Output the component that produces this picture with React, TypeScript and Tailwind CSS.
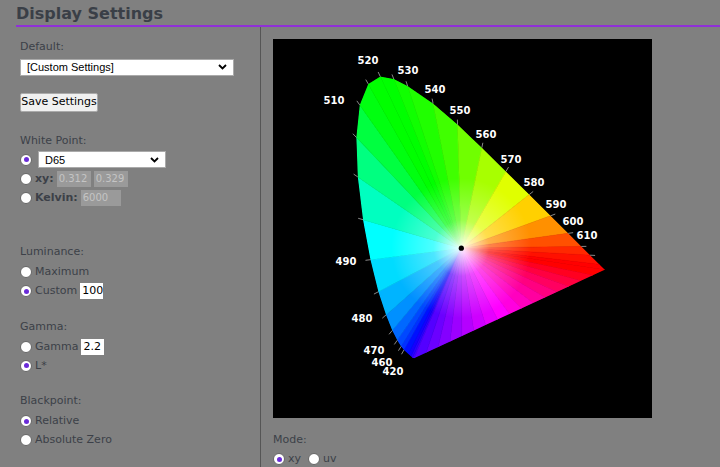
import React from 'react';

const F = { fontFamily: '"DejaVu Sans", Verdana, sans-serif' };

// CIE 1931 spectral locus, wavelength, x, y
const LOCUS: [number, number, number][] = [
  [420, 0.1741, 0.005], [430, 0.1689, 0.0069], [440, 0.1644, 0.0109], [450, 0.1566, 0.0177],
  [460, 0.144, 0.0297], [465, 0.1355, 0.0399], [470, 0.1241, 0.0578], [475, 0.1096, 0.0868],
  [480, 0.0913, 0.1327], [485, 0.0687, 0.2007], [490, 0.0454, 0.295], [495, 0.0235, 0.4127],
  [500, 0.0082, 0.5384], [505, 0.0039, 0.6548], [510, 0.0139, 0.7502], [515, 0.0389, 0.812],
  [520, 0.0743, 0.8338], [525, 0.1142, 0.8262], [530, 0.1547, 0.8059], [540, 0.2296, 0.7543],
  [550, 0.3016, 0.6923], [560, 0.3731, 0.6245], [570, 0.4441, 0.5547], [580, 0.5125, 0.4866],
  [590, 0.5752, 0.4242], [600, 0.627, 0.3725], [610, 0.6658, 0.334], [620, 0.6915, 0.3083],
  [640, 0.719, 0.2809], [700, 0.7347, 0.2653],
];

const COLORS: Record<number, string> = {
  420: '#3a00ff', 430: '#2a00ff', 440: '#1400ff', 450: '#0010ff', 460: '#0030ff', 465: '#0048ff',
  470: '#0068ff', 475: '#0090ff', 480: '#00b4ff', 485: '#00dcff', 490: '#00ffff', 495: '#00ffc0',
  500: '#00ff80', 505: '#00ff40', 510: '#00ff10', 515: '#00ff00', 520: '#00ff00', 525: '#10ff00',
  530: '#20ff00', 540: '#40ff00', 550: '#70ff00', 560: '#a8ff00', 570: '#e0ff00', 580: '#ffd000',
  590: '#ff9000', 600: '#ff5000', 610: '#ff2800', 620: '#ff1000', 640: '#ff0000', 700: '#ff0000',
};

const px = (x: number) => 356 + x * 340;
const py = (y: number) => 360 - y * 340;
const WX = px(0.3127);
const WY = py(0.329);

function lerpHex(a: string, b: string, t: number) {
  const pa = [1, 3, 5].map((i) => parseInt(a.slice(i, i + 2), 16));
  const pb = [1, 3, 5].map((i) => parseInt(b.slice(i, i + 2), 16));
  return `rgb(${pa.map((v, i) => Math.round(v + (pb[i] - v) * t)).join(',')})`;
}

const LABELS: [string, number, number][] = [
  ['520', 369, 64], ['530', 409, 74], ['540', 436, 93], ['550', 461, 114], ['560', 487, 138],
  ['570', 512, 163], ['580', 535, 186], ['590', 557, 208], ['600', 574, 225], ['610', 588, 239],
  ['510', 335, 104], ['490', 347, 265], ['480', 363, 322], ['470', 375, 354], ['460', 383, 366],
  ['420', 394, 375],
];

function Chart() {
  const pts = LOCUS.map(([w, x, y]) => ({ w, x: px(x), y: py(y), c: COLORS[w] }));
  const tris: React.ReactNode[] = [];
  for (let i = 0; i < pts.length - 1; i++) {
    const a = pts[i], b = pts[i + 1];
    tris.push(
      <polygon key={i} points={`${WX},${WY} ${a.x},${a.y} ${b.x},${b.y}`} fill={a.c} stroke={a.c} strokeWidth={0.6} />
    );
  }
  // purple line: red end back to violet start
  const r = pts[pts.length - 1], v = pts[0];
  const N = 16;
  for (let i = 0; i < N; i++) {
    const t0 = i / N, t1 = (i + 1) / N;
    const c = t0 < 0.5 ? lerpHex('#ff0000', '#ff00ff', t0 * 2) : lerpHex('#ff00ff', '#3a00ff', (t0 - 0.5) * 2);
    tris.push(
      <polygon
        key={'p' + i}
        points={`${WX},${WY} ${r.x + (v.x - r.x) * t0},${r.y + (v.y - r.y) * t0} ${r.x + (v.x - r.x) * t1},${r.y + (v.y - r.y) * t1}`}
        fill={c}
        stroke={c}
        strokeWidth={0.6}
      />
    );
  }
  const outline = pts.map((p) => `${p.x},${p.y}`).join(' ');
  return (
    <svg viewBox="274 39 379 379" className="w-[379px] h-[379px] bg-black block">
      <defs>
        <clipPath id="locus">
          <polygon points={outline} />
        </clipPath>
        <radialGradient id="white" cx={WX} cy={WY} r={70} gradientUnits="userSpaceOnUse">
          <stop offset="0" stopColor="#fff" stopOpacity={0.95} />
          <stop offset="0.4" stopColor="#fff" stopOpacity={0.3} />
          <stop offset="1" stopColor="#fff" stopOpacity={0} />
        </radialGradient>
      </defs>
      <g clipPath="url(#locus)">
        {tris}
        <rect x={274} y={39} width={379} height={379} fill="url(#white)" />
      </g>
      {pts.filter((p) => p.w >= 460 && p.w <= 620).map((p) => {
        const dx = p.x - WX, dy = p.y - WY, l = Math.hypot(dx, dy);
        return <line key={'t' + p.w} x1={p.x} y1={p.y} x2={p.x + (dx / l) * 5} y2={p.y + (dy / l) * 5} stroke="#aaa" strokeWidth={0.8} />;
      })}
      {LABELS.map(([t, x, y]) => (
        <text key={t} x={x} y={y} fill="#fff" fontSize={10} fontWeight="bold" textAnchor="middle" style={F}>
          {t}
        </text>
      ))}
      <circle cx={WX} cy={WY} r={2.6} fill="#000" />
    </svg>
  );
}

function Radio({ on }: { on?: boolean }) {
  return (
    <span className="w-[12px] h-[12px] rounded-full bg-white border border-[#666] flex items-center justify-center shrink-0">
      {on && <span className="w-[5px] h-[5px] rounded-full bg-[#6a2bd9]" />}
    </span>
  );
}

function Select({ value, w }: { value: string; w: string }) {
  return (
    <div className={`${w} h-[17px] bg-white border border-[#aaa] flex items-center justify-between px-[6px] text-[11px] text-black`}>
      <span style={{ fontFamily: '"Liberation Sans", Arial, sans-serif' }}>{value}</span>
      <svg width="9" height="6" viewBox="0 0 9 6"><path d="M1 1l3.5 3.5L8 1" stroke="#000" strokeWidth="1.8" fill="none" /></svg>
    </div>
  );
}

const Label = ({ children, cls = '' }: { children: React.ReactNode; cls?: string }) => (
  <div className={`text-[11px] text-[#3c4048] ${cls}`}>{children}</div>
);

const Row = ({ children, cls = '' }: { children: React.ReactNode; cls?: string }) => (
  <div className={`flex items-center gap-[3px] h-[19px] text-[11px] text-[#3c4048] ${cls}`}>{children}</div>
);

const Gray = ({ children, w }: { children: React.ReactNode; w: string }) => (
  <span className={`${w} h-[16px] bg-[#9a9a9a] text-[#c4c4c4] text-[10px] px-[2px] flex items-center`}>{children}</span>
);

const Box = ({ children, w }: { children: React.ReactNode; w: string }) => (
  <span className={`${w} h-[16px] bg-white text-black text-[11px] px-[2px] flex items-center`}>{children}</span>
);

export default function App() {
  return (
    <div className="w-[720px] h-[467px] bg-[#808080] overflow-hidden" style={F}>
      <div className="ml-[16px] pt-[4px] h-[27px] border-b-2 border-[#9030d8]">
        <h1 className="text-[16px] font-bold text-[#3a3f47] leading-[20px]">Display Settings</h1>
      </div>
      <div className="flex">
        <div className="w-[245px] ml-[16px] pl-[4px] pt-[12px] border-r border-[#555] h-[440px]">
          <Label>Default:</Label>
          <div className="mt-[3px]"><Select value="[Custom Settings]" w="w-[214px]" /></div>
          <button className="mt-[17px] h-[19px] w-[78px] bg-[#f0f0f0] border border-[#aaa] rounded-[2px] text-[11px] text-black">Save Settings</button>
          <Label cls="mt-[21px]">White Point:</Label>
          <Row cls="mt-[1px]"><Radio on /><span className="ml-[3px]"><Select value="D65" w="w-[128px]" /></span></Row>
          <Row><Radio /><b className="text-[#3c4048]">xy:</b><Gray w="w-[34px]">0.312</Gray><Gray w="w-[34px]">0.329</Gray></Row>
          <Row><Radio /><b className="text-[#3c4048]">Kelvin:</b><Gray w="w-[40px]">6000</Gray></Row>
          <Label cls="mt-[37px]">Luminance:</Label>
          <Row cls="mt-[2px]"><Radio />Maximum</Row>
          <Row><Radio on />Custom<Box w="w-[23px]">100</Box></Row>
          <Label cls="mt-[18px]">Gamma:</Label>
          <Row cls="mt-[2px]"><Radio />Gamma<Box w="w-[23px]">2.2</Box></Row>
          <Row><Radio on />L*</Row>
          <Label cls="mt-[18px]">Blackpoint:</Label>
          <Row cls="mt-[2px]"><Radio on />Relative</Row>
          <Row><Radio />Absolute Zero</Row>
        </div>
        <div className="ml-[12px] pt-[12px]">
          <Chart />
          <Label cls="mt-[14px]">Mode:</Label>
          <Row cls="mt-[1px]"><Radio on />xy<span className="ml-[4px]"><Radio /></span>uv</Row>
        </div>
      </div>
    </div>
  );
}
